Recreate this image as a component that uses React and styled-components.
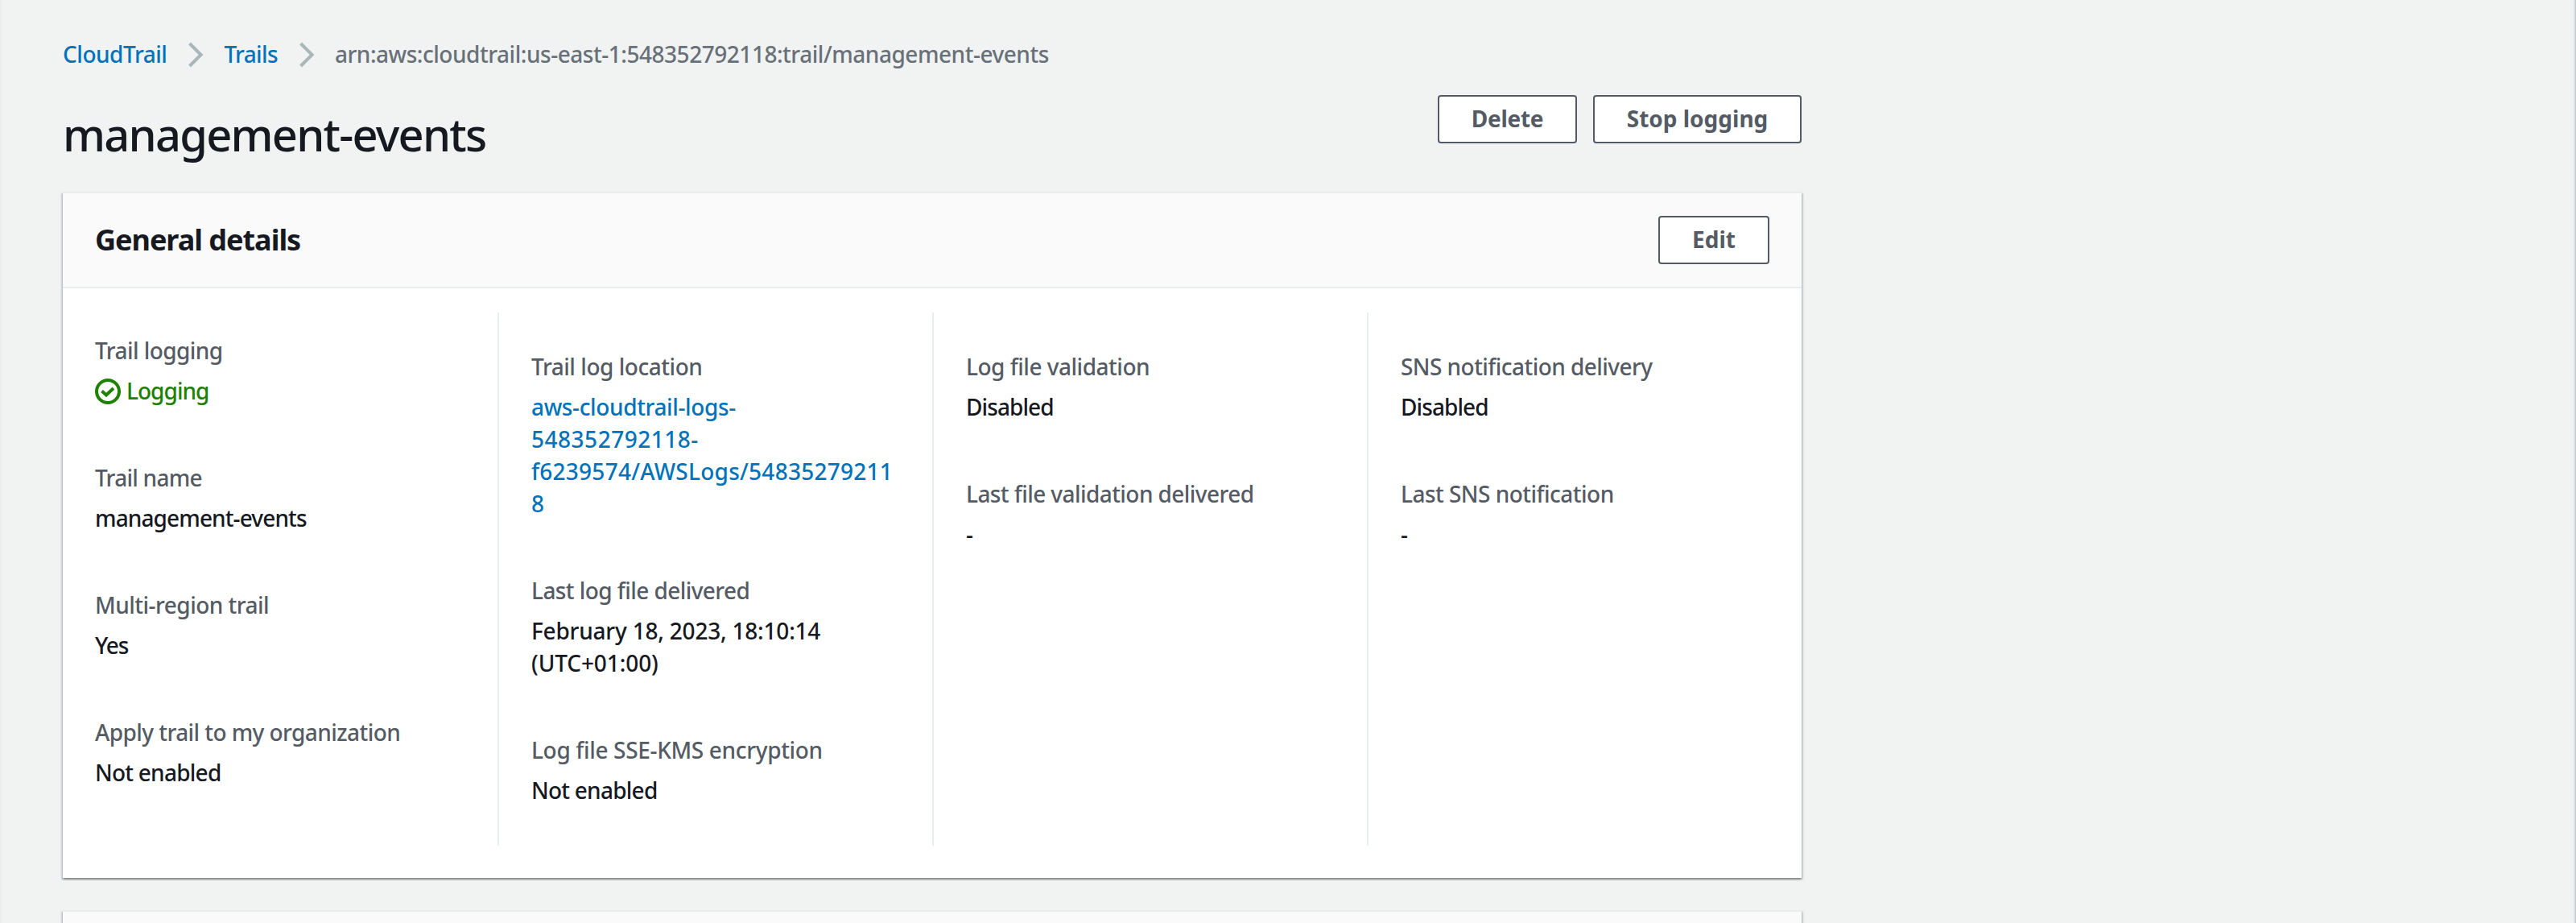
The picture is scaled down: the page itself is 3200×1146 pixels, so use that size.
import React from "react";
import styled, { createGlobalStyle } from "styled-components";

const GlobalStyle = createGlobalStyle`
  *, *::before, *::after { box-sizing: border-box; }
  body { margin: 0; background: #f1f3f3; }
`;

const Page = styled.div`
  display: flex;
  height: 1146px;
  overflow: hidden;
  border-left: 2px solid #eceeee;
  background: linear-gradient(to right, #f1f3f3, #dde1e1 60%, #b7c0c1) right / 4px 100% no-repeat;
  color: #16191f;
  font: 500 28px/40px "Noto Sans", "Open Sans", sans-serif;
`;
const Content = styled.main`
  display: flex;
  flex-direction: column;
  width: 2162px;
  flex: none;
  margin-left: 76px;
`;
const Breadcrumbs = styled.nav`
  display: flex;
  flex: none;
  align-items: center;
  padding-top: 47px;
  height: 87px;
`;
const Text = styled.span`
  letter-spacing: ${(p) => p.$track || 0}px;
`;
const Link = styled.a`
  color: #0073bb;
  text-decoration: none;
  letter-spacing: ${(p) => p.$track || 0}px;
`;
const CurrentCrumb = styled(Text)`
  color: #687078;
`;
const ChevronIcon = styled.svg`
  width: 20px;
  height: 32px;
  margin: 2px 25px 0 26px;
  fill: none;
  stroke: #aab7b8;
  stroke-width: 4;
`;
const PageHeader = styled.header`
  display: flex;
  flex: none;
  justify-content: space-between;
  align-items: flex-start;
  width: 2160px;
  height: 151px;
  padding-top: 31px;
`;
const PageTitle = styled.h1`
  margin: 18px 0 0;
  font-size: 56px;
  line-height: 60px;
  font-weight: 500;
  letter-spacing: ${(p) => p.$track}px;
`;
const Actions = styled.div`
  display: flex;
  gap: 20px;
`;
const Button = styled.button`
  width: ${(p) => p.$width}px;
  height: 60px;
  padding: 0 0 2px;
  border: 2px solid #545b64;
  border-radius: 4px;
  background: #fff;
  color: #545b64;
  font: 700 28px/40px "Noto Sans", "Open Sans", sans-serif;
  letter-spacing: ${(p) => p.$track || 0}px;
`;
const Card = styled.section`
  width: 2160px;
  flex: none;
  margin-bottom: 40px;
  border-top: 2px solid #eaeded;
  background: #fff;
  box-shadow: 0 2px 2px 0 rgba(0, 28, 36, 0.3), 2px 2px 2px 0 rgba(0, 28, 36, 0.15),
    -2px 2px 2px 0 rgba(0, 28, 36, 0.15);
`;
const CardHeader = styled.div`
  display: flex;
  align-items: center;
  justify-content: space-between;
  height: 118px;
  padding: 0 40px;
  border-bottom: 2px solid #eaeded;
  background: #fafafa;
`;
const CardTitle = styled.h2`
  margin: 0;
  font-size: 36px;
  line-height: 44px;
  font-weight: 700;
  letter-spacing: ${(p) => p.$track}px;
`;
const Columns = styled.div`
  display: grid;
  grid-template-columns: repeat(4, 540px);
  height: 662px;
  margin: 30px 0 40px;
`;
const Column = styled.div`
  display: flex;
  flex-direction: column;
  gap: 68px;
  padding: 47px 40px 0;
  border-left: 2px solid #eaeded;
  &:first-child {
    padding-top: 27px;
    border-left: none;
  }
`;
const Label = styled.div`
  margin-bottom: 10px;
  color: #545b64;
  letter-spacing: ${(p) => p.$track || 0}px;
`;
const Value = styled.div`
  display: flex;
  flex-direction: column;
  align-items: flex-start;
  white-space: nowrap;
`;
const Status = styled.div`
  display: flex;
  align-items: center;
  gap: 7px;
  color: #1d8102;
`;
const StatusIcon = styled.svg`
  width: 32px;
  height: 32px;
  margin-top: 2px;
  fill: none;
  stroke: currentColor;
  stroke-width: 4;
`;

const Chevron = () => (
  <ChevronIcon viewBox="0 0 20 32" aria-hidden="true">
    <path d="M2.6 2 L16.6 16 L2.6 30" />
  </ChevronIcon>
);

const columns = [
  [
    { label: ["Trail logging", -0.56], status: ["Logging", -0.97] },
    { label: ["Trail name", -0.74], lines: [["management-events", -0.88]] },
    { label: ["Multi-region trail", -0.52], lines: [["Yes", -1.11]] },
    { label: ["Apply trail to my organization", -0.57], lines: [["Not enabled", -0.76]] },
  ],
  [
    {
      label: ["Trail log location", -0.46],
      link: true,
      lines: [
        ["aws-cloudtrail-logs-", -0.37],
        ["548352792118-", 0.51],
        ["f6239574/AWSLogs/54835279211", 0.26],
        ["8", 0],
      ],
    },
    {
      label: ["Last log file delivered", -0.57],
      lines: [
        ["February 18, 2023, 18:10:14", -0.21],
        ["(UTC+01:00)", -0.1],
      ],
    },
    { label: ["Log file SSE-KMS encryption", -0.34], lines: [["Not enabled", -0.76]] },
  ],
  [
    { label: ["Log file validation", -0.49], lines: [["Disabled", -0.92]] },
    { label: ["Last file validation delivered", -0.57], lines: [["-", 0]] },
  ],
  [
    { label: ["SNS notification delivery", -0.55], lines: [["Disabled", -0.92]] },
    { label: ["Last SNS notification", -0.52], lines: [["-", 0]] },
  ],
];

function Field({ label, lines = [], link, status }) {
  const Line = link ? Link : Text;
  return (
    <div>
      <Label $track={label[1]}>{label[0]}</Label>
      {status && (
        <Status>
          <StatusIcon viewBox="0 0 32 32" aria-hidden="true">
            <circle cx="16" cy="16" r="14" />
            <path d="M8.5 15.5 L14 20.5 L23 12" />
          </StatusIcon>
          <Text $track={status[1]}>{status[0]}</Text>
        </Status>
      )}
      <Value>
        {lines.map(([text, track]) => (
          <Line key={text} $track={track}>
            {text}
          </Line>
        ))}
      </Value>
    </div>
  );
}

export default function App() {
  return (
    <Page>
      <GlobalStyle />
      <Content>
        <Breadcrumbs>
          <Link $track={-0.47}>CloudTrail</Link>
          <Chevron />
          <Link $track={-0.65}>Trails</Link>
          <Chevron />
          <CurrentCrumb $track={-0.47}>
            arn:aws:cloudtrail:us-east-1:548352792118:trail/management-events
          </CurrentCrumb>
        </Breadcrumbs>
        <PageHeader>
          <PageTitle $track={-1.75}>management-events</PageTitle>
          <Actions>
            <Button $width={173} $track={-0.3}>Delete</Button>
            <Button $width={259}>Stop logging</Button>
          </Actions>
        </PageHeader>
        <Card>
          <CardHeader>
            <CardTitle $track={-1.02}>General details</CardTitle>
            <Button $width={138}>Edit</Button>
          </CardHeader>
          <Columns>
            {columns.map((fields, i) => (
              <Column key={i}>
                {fields.map((field) => (
                  <Field key={field.label[0]} {...field} />
                ))}
              </Column>
            ))}
          </Columns>
        </Card>
        <Card>
          <CardHeader />
        </Card>
      </Content>
    </Page>
  );
}
